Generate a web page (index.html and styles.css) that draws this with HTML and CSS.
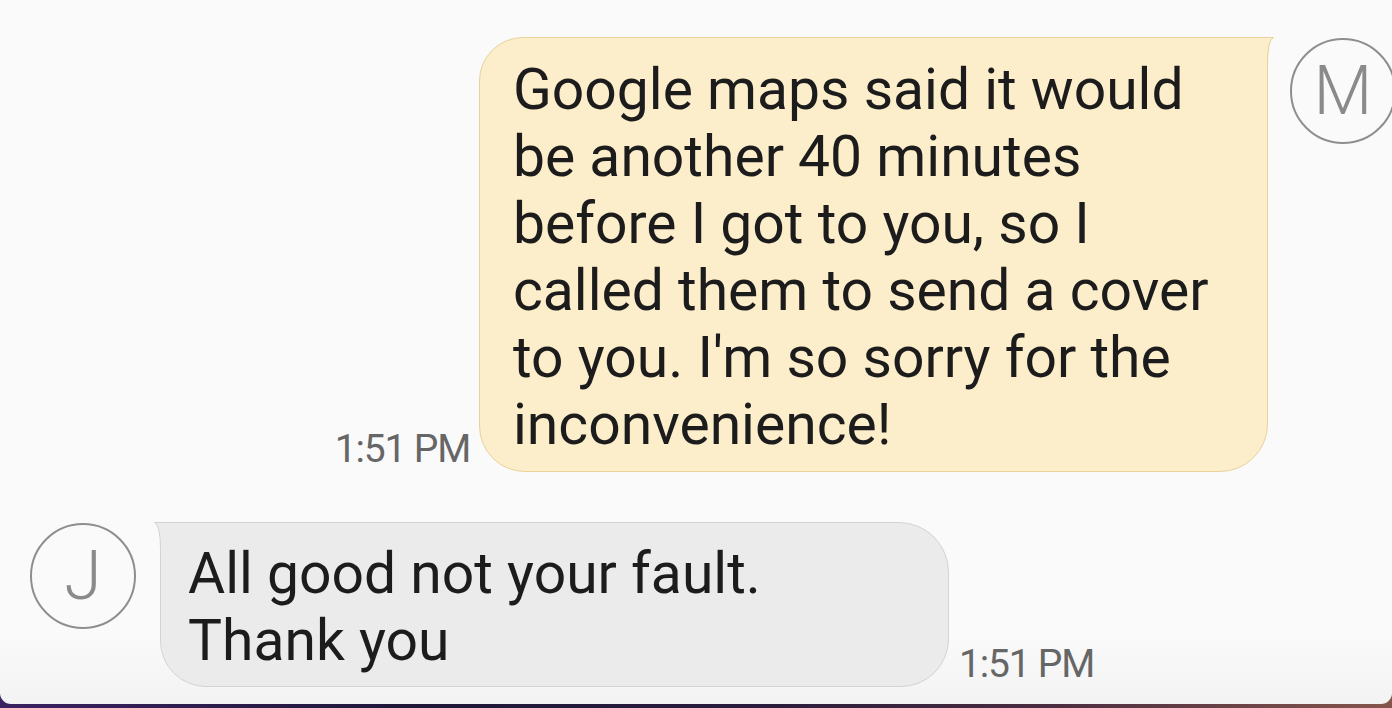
FILE: index.html
```html
<!DOCTYPE html>
<html lang="en">
<head>
<meta charset="utf-8">
<title>Messages</title>
<link rel="stylesheet" href="styles.css">
</head>
<body>
<div class="screen">
  <div class="row row-sent">
    <div class="time time-sent">1:51 PM</div>
    <div class="bubble bubble-sent">
      <svg class="tail tail-sent" width="10" height="28" viewBox="0 0 10 28" aria-hidden="true">
        <path d="M0 0 H10 Q3.5 3 3.5 28 H0 Z" fill="#fcedcb"/>
        <path d="M0 0.5 H9.5 Q3.5 3 3.5 28" fill="none" stroke="#e8d39b" stroke-width="1"/>
      </svg>
      Google maps said it would<br>be another 40 minutes<br>before I got to you, so I<br>called them to send a cover<br>to you. I'm so sorry for the<br>inconvenience!
    </div>
    <div class="avatar">M</div>
  </div>
  <div class="row row-received">
    <div class="avatar">J</div>
    <div class="bubble bubble-received">
      <svg class="tail tail-received" width="10" height="28" viewBox="0 0 10 28" aria-hidden="true">
        <path d="M10 0 H0 Q6.5 3 6.5 28 H10 Z" fill="#ebebeb"/>
        <path d="M10 0.5 H0.5 Q6.5 3 6.5 28" fill="none" stroke="#d3d3d3" stroke-width="1"/>
      </svg>
      All good not your fault.<br>Thank you
    </div>
    <div class="time time-received">1:51 PM</div>
  </div>
</div>
</body>
</html>
```
FILE: styles.css
```css
html, body {
  margin: 0;
  padding: 0;
}

body {
  width: 1392px;
  height: 708px;
  overflow: hidden;
  background: linear-gradient(90deg, #3b2262 0%, #1d1838 30%, #2a1c3c 55%, #4a2c40 75%, #86564c 100%);
  font-family: Roboto, "Noto Sans", "Liberation Sans", sans-serif;
}

.screen {
  box-sizing: border-box;
  height: 704px;
  padding-top: 37px;
  background: linear-gradient(180deg, #fafafa 0%, #fafafa 90%, #f3f3f3 100%);
  border-radius: 0 0 11px 11px;
  overflow: hidden;
  display: flex;
  flex-direction: column;
  gap: 50px;
}

.row {
  display: flex;
  align-items: flex-start;
}

.row-sent {
  justify-content: flex-end;
  margin-right: -4px;
}

.row-received {
  justify-content: flex-start;
  padding-left: 30px;
}

.bubble {
  position: relative;
  box-sizing: border-box;
  width: 789px;
  font-size: 57px;
  line-height: 67px;
  color: #1c1c1c;
  border: 1px solid;
}

.bubble-sent {
  background: #fcedcb;
  border-color: #e8d39b;
  border-radius: 44px 0 48px 46px;
  padding: 18px 36px 13px 33px;
  margin-right: 22px;
}

.bubble-received {
  background: #ebebeb;
  border-color: #d3d3d3;
  border-radius: 0 50px 48px 46px;
  padding: 17px 27px 12px 27px;
  margin-left: 24px;
}

.tail {
  position: absolute;
  top: -1px;
}

.tail-sent {
  right: -7px;
}

.tail-received {
  left: -7px;
}

.time {
  align-self: flex-end;
  font-size: 39px;
  letter-spacing: -1.2px;
  line-height: 45px;
  color: #666666;
  margin-bottom: 0;
  white-space: nowrap;
}

.time-sent {
  margin-right: 9px;
}

.time-received {
  margin-left: 10px;
}

.avatar {
  box-sizing: border-box;
  flex: 0 0 106px;
  width: 106px;
  height: 106px;
  margin-top: 1px;
  border: 2px solid #8e8e8e;
  border-radius: 50%;
  display: flex;
  align-items: center;
  justify-content: center;
  font-size: 68px;
  font-weight: 300;
  color: #8a8a8a;
  line-height: 1;
}
```
